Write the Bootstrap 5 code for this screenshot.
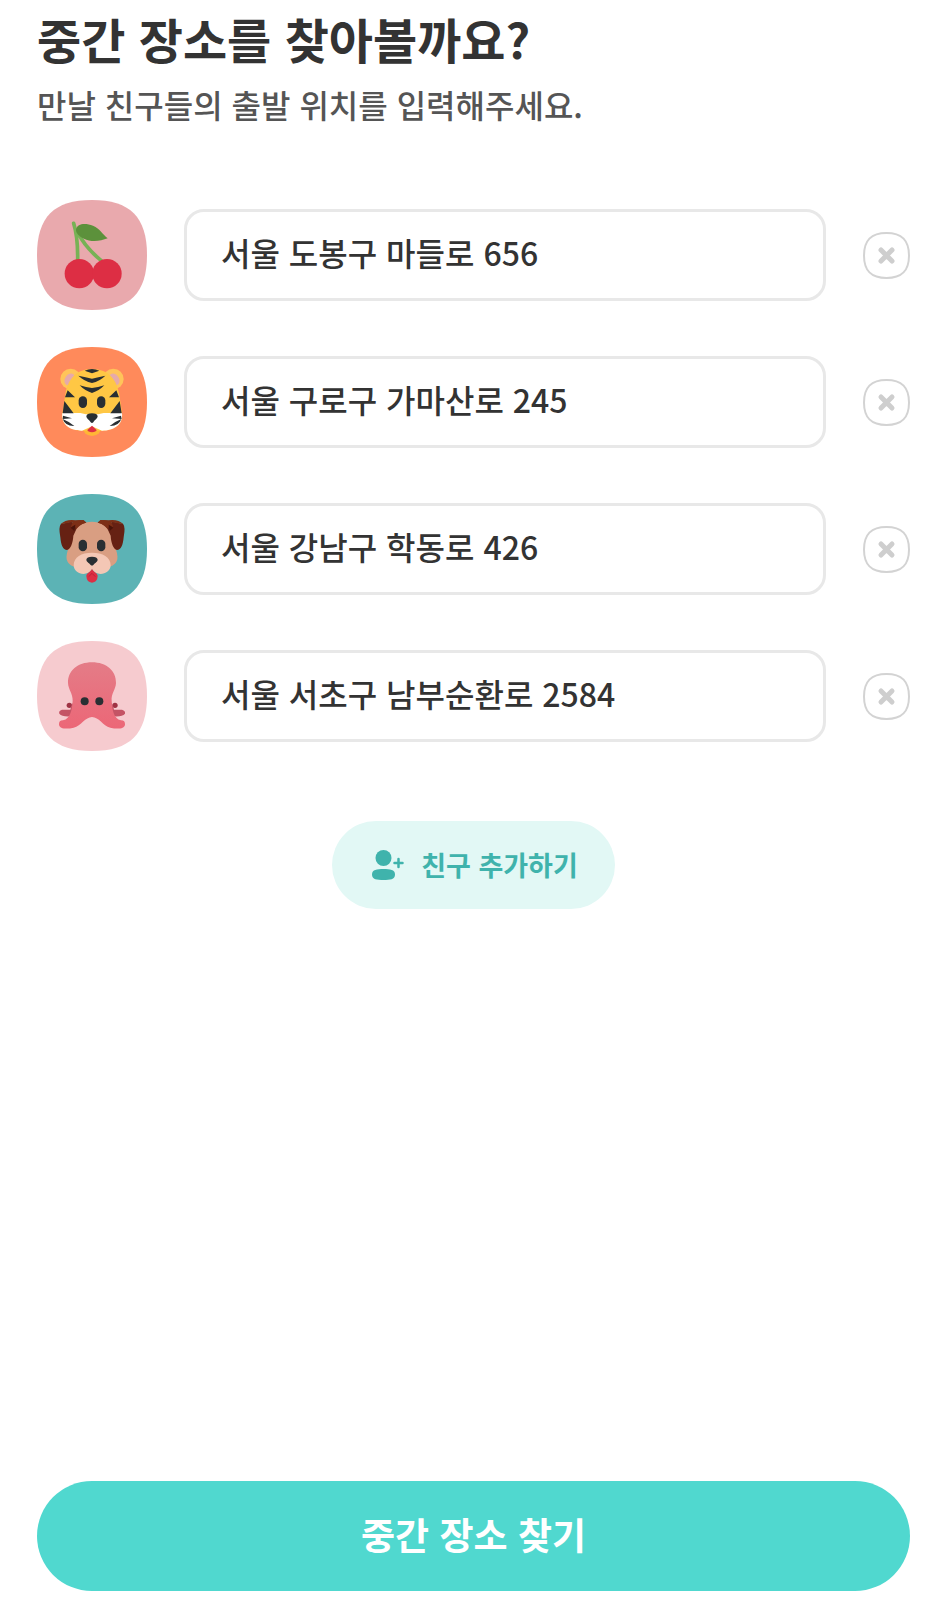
<!DOCTYPE html>
<html lang="ko">
<head>
<meta charset="utf-8">
<meta name="viewport" content="width=device-width, initial-scale=1">
<title>중간 장소 찾기</title>
<link href="https://cdn.jsdelivr.net/npm/bootstrap@5.3.0/dist/css/bootstrap.min.css" rel="stylesheet">
<style>
  body { font-family: "Noto Sans CJK KR", sans-serif; color: #333; background: #fff; }
  .screen { padding: 10px 36px 8px 37px; }
  .screen-title { font-size: 48px; line-height: 56px; font-weight: 700; }
  .screen-lead { font-size: 32px; line-height: 48px; margin-top: 14px; color: #555; font-weight: 500; }
  .friend-list { gap: 37px; margin-top: 72px; }
  .friend-row { gap: 37px; }
  .avatar { width: 110px; height: 110px; }
  .address { height: 92px; padding: 0 34px 6px; font-size: 32px; font-weight: 500; color: #333; border: 3px solid #e8e8e8; border-radius: 20px; }
  .address:focus { color: #333; border-color: #50d8cf; box-shadow: none; }
  .remove-btn { width: 47px; height: 47px; }
  .add-btn { height: 88px; margin-top: 70px; padding: 0 37px 0 39px; gap: 17px; font-size: 27px; font-weight: 700; color: #3fb3ac; background: #e2f8f5; }
  .add-btn:hover { color: #3fb3ac; background: #d3f2ef; }
  .find-btn { height: 110px; padding: 0 0 2px; font-size: 37px; font-weight: 700; color: #fff; background: #50d8cf; }
  .find-btn:hover { color: #fff; background: #43c9c0; }
</style>
</head>
<body>
<svg width="0" height="0" class="position-absolute" aria-hidden="true">
  <defs>
    <path id="squircle" d="M0 165C0 51 51 0 165 0S330 51 330 165 279 330 165 330 0 279 0 165Z"/>
    <g id="cross">
      <path d="M1 23.500C1 8 8 1 23.500 1S46 8 46 23.500 39 46 23.500 46 1 39 1 23.500Z" fill="none" stroke="#d3d3d3" stroke-width="2"/>
      <path d="M18 18L29 29M29 18L18 29" stroke="#cecece" stroke-width="5" stroke-linecap="round"/>
    </g>
    <linearGradient id="octo" x1="0" y1="0" x2="0" y2="1"><stop offset="0" stop-color="#e47c87"/><stop offset="1" stop-color="#ec6777"/></linearGradient>
  </defs>
</svg>

<main class="screen container-fluid min-vh-100 d-flex flex-column">
  <h1 class="screen-title mb-0">중간 장소를 찾아볼까요?</h1>
  <p class="screen-lead mb-0">만날 친구들의 출발 위치를 입력해주세요.</p>

  <ul class="friend-list list-unstyled mb-0 d-flex flex-column">
    <li class="friend-row d-flex align-items-center">
      <svg class="avatar flex-shrink-0" viewBox="0 0 330 330" aria-hidden="true">
        <use href="#squircle" fill="#e9a9ad"/>
        <g transform="translate(-50 -30)">
          <path d="M160 100Q173 140 172 212M174 130Q194 172 243 212" fill="none" stroke="#77b255" stroke-width="11" stroke-linecap="round"/>
          <path d="M167 119C171 99 196 99 218 107C240 117 246 132 262 145C240 154 211 157 191 146C175 138 167 129 167 119Z" fill="#5c913b"/>
          <circle cx="177" cy="251" r="44" fill="#dd2e44"/><circle cx="260" cy="251" r="44" fill="#dd2e44"/>
        </g>
      </svg>
      <input class="address form-control" type="text" value="서울 도봉구 마들로 656" aria-label="체리 친구의 출발 위치">
      <button type="button" class="remove-btn btn border-0 p-0 d-flex flex-shrink-0" aria-label="체리 친구 삭제"><svg width="47" height="47" viewBox="0 0 47 47"><use href="#cross"/></svg></button>
    </li>
    <li class="friend-row d-flex align-items-center">
      <svg class="avatar flex-shrink-0" viewBox="0 0 330 330" aria-hidden="true">
        <use href="#squircle" fill="#ff8a5b"/>
        <g transform="translate(-50 -37)">
          <circle cx="151" cy="133" r="31" fill="#ffc45a"/><circle cx="279" cy="133" r="31" fill="#ffc45a"/>
          <ellipse cx="148" cy="134" rx="14" ry="19" fill="#e6aaaa" transform="rotate(35 148 134)"/><ellipse cx="282" cy="134" rx="14" ry="19" fill="#e6aaaa" transform="rotate(-35 282 134)"/>
          <circle cx="215" cy="275" r="29" fill="#ffb636"/>
          <path d="M215 103C266 103 290 137 297 180L305 235C310 271 278 287 248 288H182C151 287 121 271 126 235L135 180C142 137 165 103 215 103Z" fill="#ffc744"/>
          <path d="M126 235H180L197 239H233L250 235H305C309 271 280 288 245 288L215 275L185 288C150 288 122 271 126 235Z" fill="#fff"/>
          <g fill="#292f33">
            <path d="M193 108Q215 98 237 108L215 116Z"/>
            <path d="M174 123Q197 128 215 132Q233 128 255 123Q238 140 215 145Q192 140 174 123Z"/>
            <path d="M178 152Q198 158 215 160Q233 158 252 152Q237 168 215 175Q193 168 178 152Z"/>
            <path d="M142 167L164 188L134 188ZM288 167L266 188L296 188Z"/>
            <path d="M132 199L160 236H127ZM298 199L270 236H304Z"/>
            <path d="M128 243L155 251L127 253ZM302 243L275 251L304 253Z"/>
            <path d="M127 253Q145 260 162 274Q135 275 127 253ZM303 253Q285 260 268 274Q295 275 303 253Z"/>
            <rect x="175" y="185" width="25" height="35" rx="12.500"/><rect x="230" y="185" width="25" height="35" rx="12.500"/>
            <path d="M198 245Q199 236 215 236Q231 236 232 245C231 253 222 256 219 263Q215 267 211 263C208 256 199 253 198 245Z"/>
          </g>
          <path d="M215 273L201 286Q203 292 215 293Q227 292 229 286Z" fill="#dd2e44"/>
        </g>
      </svg>
      <input class="address form-control" type="text" value="서울 구로구 가마산로 245" aria-label="호랑이 친구의 출발 위치">
      <button type="button" class="remove-btn btn border-0 p-0 d-flex flex-shrink-0" aria-label="호랑이 친구 삭제"><svg width="47" height="47" viewBox="0 0 47 47"><use href="#cross"/></svg></button>
    </li>
    <li class="friend-row d-flex align-items-center">
      <svg class="avatar flex-shrink-0" viewBox="0 0 330 330" aria-hidden="true">
        <use href="#squircle" fill="#5cb3b5"/>
        <g transform="translate(-50 -30)">
          <path d="M152 119Q175 101 198 115L175 145ZM278 119Q255 101 232 115L255 145Z" fill="#7d2f16"/>
          <path d="M215 113C257 113 277 149 284 186C289 203 293 216 291 226C287 244 270 249 255 252H175C160 249 143 244 139 226C137 216 141 203 146 186C153 149 173 113 215 113Z" fill="#d99e82"/>
          <path d="M152 113L122 120Q114 128 120 160C122 184 128 198 140 198C151 195 158 176 159 155L168 136Q163 116 152 113ZM278 113L308 120Q316 128 310 160C308 184 302 198 290 198C279 195 272 176 271 155L262 136Q267 116 278 113Z" fill="#662113"/>
          <path d="M120 121Q138 104 166 109L190 108L198 116Q175 120 168 136L165 122L151 130L157 114ZM310 121Q292 104 264 109L240 108L232 116Q255 120 262 136L265 122L279 130L273 114Z" fill="#7d2f16"/>
          <path d="M151 131L165 122L162 141ZM279 131L265 122L268 141Z" fill="#4a1409"/>
          <path d="M215 206C247 206 271 219 271 244C271 270 230 280 215 256C200 280 160 270 160 244C160 219 183 206 215 206Z" fill="#f4c7b5"/>
          <path d="M215 254C218 264 232 266 232 276Q231 295 215 296Q199 295 198 276C198 266 212 264 215 254Z" fill="#dd2e44"/>
          <path d="M205 278L215 268L225 278" fill="none" stroke="#bd2038" stroke-width="3"/>
          <g fill="#292f33"><rect x="175" y="167" width="25" height="35" rx="12.500"/><rect x="230" y="167" width="25" height="35" rx="12.500"/>
          <path d="M198 227Q199 218 215 218Q231 218 232 227C231 235 222 237 219 243Q215 246 211 243C208 237 199 235 198 227Z"/></g>
        </g>
      </svg>
      <input class="address form-control" type="text" value="서울 강남구 학동로 426" aria-label="강아지 친구의 출발 위치">
      <button type="button" class="remove-btn btn border-0 p-0 d-flex flex-shrink-0" aria-label="강아지 친구 삭제"><svg width="47" height="47" viewBox="0 0 47 47"><use href="#cross"/></svg></button>
    </li>
    <li class="friend-row d-flex align-items-center">
      <svg class="avatar flex-shrink-0" viewBox="0 0 330 330" aria-hidden="true">
        <use href="#squircle" fill="#f6cbcf"/>
        <g transform="translate(-50 -37)">
          <circle cx="147" cy="230" r="8" fill="#9f3344"/><circle cx="284" cy="230" r="8" fill="#9f3344"/>
          <path d="M158 222Q152 230 150 243H125Q114 246 117 255Q125 265 151 263L165 250ZM273 222Q279 230 281 243H305Q316 246 314 255Q306 265 280 263L266 250Z" fill="#c45465"/>
          <path d="M215 101C258 101 288 126 287 163C286 183 272 195 274 216C276 244 279 269 302 275Q315 275 314 288C312 301 291 302 270 297C247 291 236 265 215 265C195 265 183 291 160 297C139 302 118 301 116 288Q115 275 128 275C151 269 155 244 157 216C158 195 144 183 143 163C142 126 172 101 215 101Z" fill="url(#octo)"/>
          <circle cx="193" cy="218" r="12" fill="#292f33"/><circle cx="237" cy="218" r="12" fill="#292f33"/>
        </g>
      </svg>
      <input class="address form-control" type="text" value="서울 서초구 남부순환로 2584" aria-label="문어 친구의 출발 위치">
      <button type="button" class="remove-btn btn border-0 p-0 d-flex flex-shrink-0" aria-label="문어 친구 삭제"><svg width="47" height="47" viewBox="0 0 47 47"><use href="#cross"/></svg></button>
    </li>
  </ul>

  <button type="button" class="add-btn btn border-0 rounded-pill align-self-center d-flex align-items-center">
    <svg width="33" height="32" viewBox="0 0 33 32" fill="currentColor" aria-hidden="true">
      <circle cx="12.500" cy="9" r="8"/>
      <path d="M1 25.500C1 20.500 6 20 12.500 20S24 20.500 24 25.500 19 31 12.500 31 1 30.500 1 25.500Z"/>
      <path d="M27.500 10V18M23.500 14H31.500" stroke="currentColor" stroke-width="2.500" stroke-linecap="round"/>
    </svg>
    <span>친구 추가하기</span>
  </button>

  <button type="submit" class="find-btn btn border-0 rounded-pill w-100 mt-auto">중간 장소 찾기</button>
</main>
<script src="https://cdn.jsdelivr.net/npm/bootstrap@5.3.0/dist/js/bootstrap.bundle.min.js"></script>
</body>
</html>
